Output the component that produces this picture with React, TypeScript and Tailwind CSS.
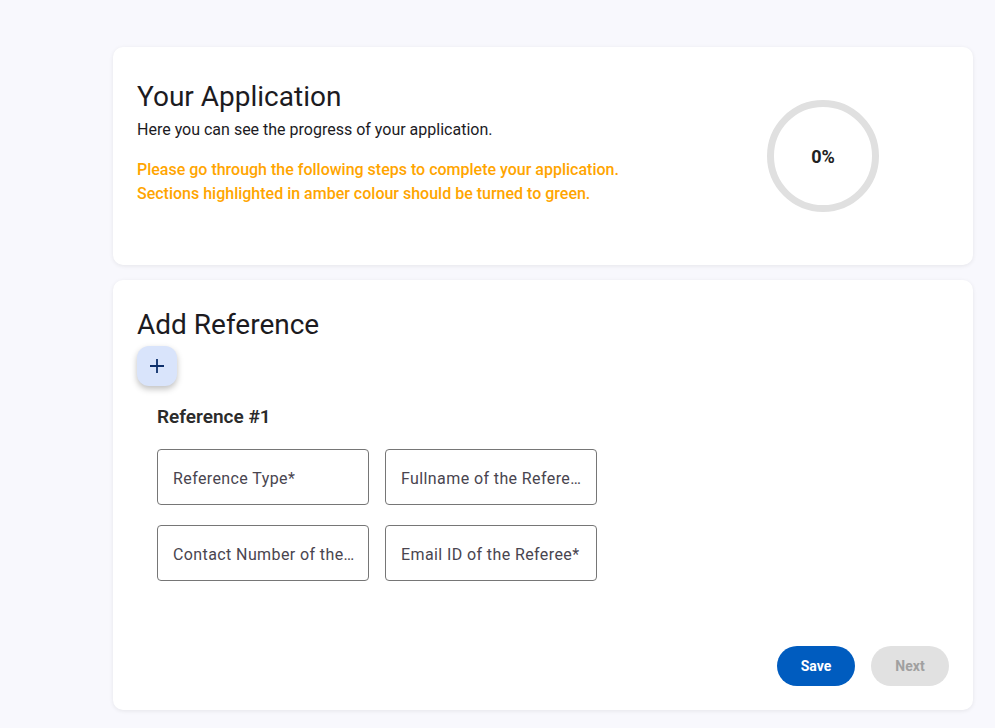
import React from "react";

export default function App() {
  const font = { fontFamily: "Roboto, 'Noto Sans', sans-serif" };
  return (
    <div className="min-h-[728px] w-full bg-[#f8f8fd] pl-[113px] pr-[22px] pt-[47px] pb-[18px]" style={font}>
      <div className="flex flex-col gap-[15px] w-[860px]">
        <div className="bg-white rounded-[10px] shadow-[0_1px_4px_rgba(0,0,0,0.08)] h-[218px] flex items-start justify-between px-6 pt-[33px]">
          <div className="flex flex-col">
            <h1 className="text-[28px] leading-[34px] text-[#1c1b1f]">Your Application</h1>
            <p className="text-[16px] leading-[20px] text-[#1c1b1f] mt-[6px]">Here you can see the progress of your application.</p>
            <div className="mt-[18px] text-[16px] leading-[24px] font-medium text-[#ffa500]">
              <p>Please go through the following steps to complete your application.</p>
              <p>Sections highlighted in amber colour should be turned to green.</p>
            </div>
          </div>
          <div className="mr-[70px] mt-[20px] relative w-[112px] h-[112px] flex items-center justify-center">
            <svg width="112" height="112" viewBox="0 0 112 112" className="absolute inset-0">
              <circle cx="56" cy="56" r="52.5" fill="none" stroke="#e0e0e0" strokeWidth="7" />
            </svg>
            <span className="relative text-[18px] font-bold text-[#222]">0%</span>
          </div>
        </div>

        <div className="bg-white rounded-[10px] shadow-[0_1px_4px_rgba(0,0,0,0.08)] h-[430px] flex flex-col px-6 pt-[28px] pb-6">
          <h2 className="text-[28px] leading-[34px] text-[#1c1b1f]">Add Reference</h2>
          <button className="mt-[4px] w-10 h-10 rounded-[12px] bg-[#d9e4fb] shadow-[0_3px_6px_rgba(0,0,0,0.25)] flex items-center justify-center">
            <svg width="18" height="18" viewBox="0 0 18 18">
              <path d="M9 2v14M2 9h14" stroke="#0d2f6b" strokeWidth="1.8" fill="none" />
            </svg>
          </button>
          <div className="pl-5 mt-[20px]">
            <h3 className="text-[19px] leading-[22px] font-semibold text-[#2b2b2b]">Reference #1</h3>
            <div className="mt-[21px] grid grid-cols-[212px_212px] gap-x-4 gap-y-5">
              {["Reference Type*", "Fullname of the Referee*", "Contact Number of the Referee*", "Email ID of the Referee*"].map((t) => (
                <div key={t} className="h-14 border border-[#767676] rounded-[4px] flex items-center pl-[15px] pr-[10px] pt-[3px]">
                  <span className="text-[16px] text-[#49454f] truncate tracking-[0.4px]">{t}</span>
                </div>
              ))}
            </div>
          </div>
          <div className="mt-auto flex justify-end gap-4">
            <button className="w-[78px] h-10 rounded-full bg-[#005cbf] text-white text-[14px] font-bold">Save</button>
            <button className="w-[78px] h-10 rounded-full bg-[#e1e1e1] text-[#a0a0a0] text-[14px] font-bold">Next</button>
          </div>
        </div>
      </div>
    </div>
  );
}
